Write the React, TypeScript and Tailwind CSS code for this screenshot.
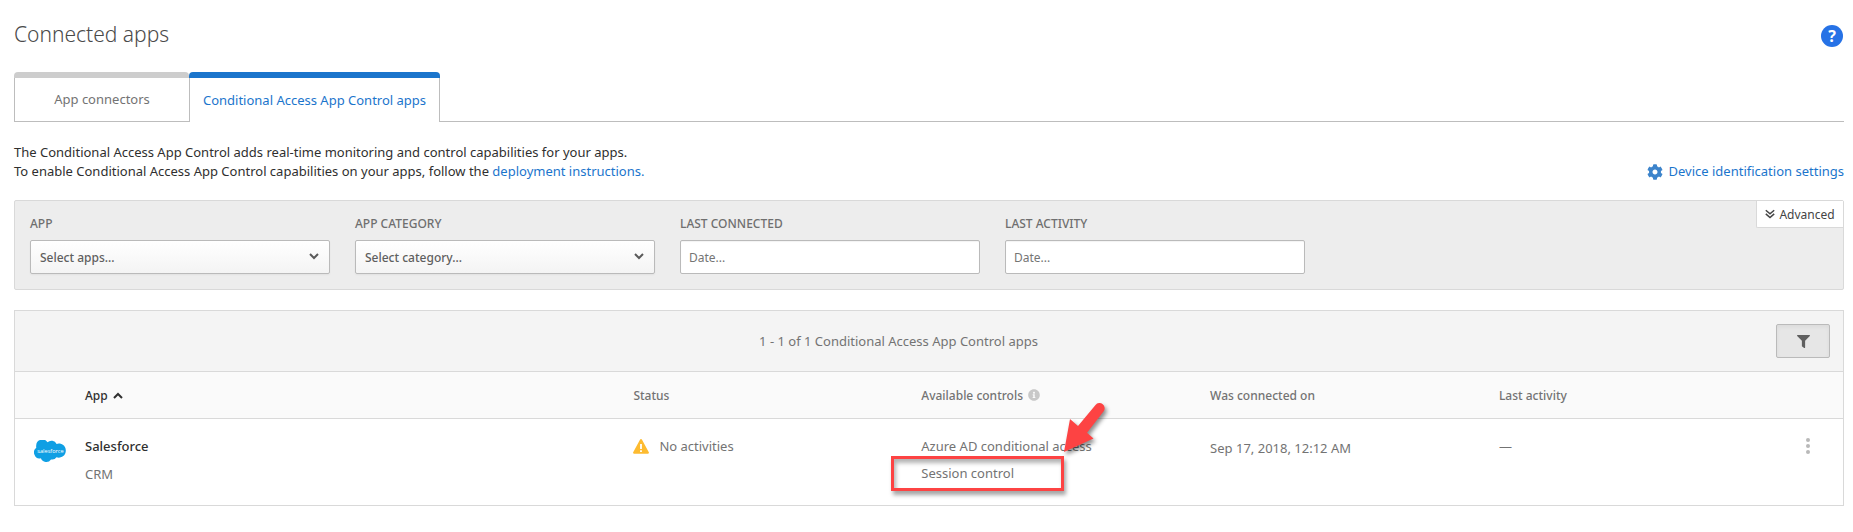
import { FaCog, FaFilter, FaInfoCircle } from 'react-icons/fa';

type Filter = { id: string; label: string; placeholder: string; kind: 'select' | 'date' };

const filters: Filter[] = [
  { id: 'app', label: 'APP', placeholder: 'Select apps...', kind: 'select' },
  { id: 'category', label: 'APP CATEGORY', placeholder: 'Select category...', kind: 'select' },
  { id: 'connected', label: 'LAST CONNECTED', placeholder: 'Date...', kind: 'date' },
  { id: 'activity', label: 'LAST ACTIVITY', placeholder: 'Date...', kind: 'date' },
];

function Chevron({ className }: { className: string }) {
  return (
    <svg viewBox="0 0 10 7" fill="none" stroke="currentColor" strokeWidth="2" className={className} aria-hidden="true">
      <path d="M1 1l4 4 4-4" />
    </svg>
  );
}

function DoubleChevron() {
  return (
    <svg width="10" height="10" viewBox="0 0 10 10" fill="none" stroke="currentColor" strokeWidth="1.5" aria-hidden="true">
      <path d="M.8 1.200l4.200 3.600 4.200-3.600M.8 4.900l4.200 3.600 4.200-3.600" />
    </svg>
  );
}

function WarningIcon() {
  return (
    <svg width="16" height="15" viewBox="0 0 16 15" aria-hidden="true">
      <path d="M7.1.6a1 1 0 0 1 1.8 0l6.9 12.7a1 1 0 0 1-.9 1.5H1.1a1 1 0 0 1-.9-1.5z" fill="#fdbb30" />
      <path d="M7.100 5h1.800v5H7.100zM7.100 11.200h1.800V13H7.100z" fill="#fff" />
    </svg>
  );
}

function SalesforceLogo() {
  return (
    <svg width="32" height="23" viewBox="0 0 32 23" role="img" aria-label="Salesforce">
      <path
        d="M13.500 2.200A6.200 6.200 0 0 0 2.200 5.500 6.500 6.500 0 0 0 2.300 7.800 5.700 5.700 0 0 0 .4 14.500 5.600 5.600 0 0 0 6.900 18.200 5.700 5.700 0 0 0 17 19.400 5.200 5.200 0 0 0 22.500 17.300 7 7 0 0 0 31.800 10.400 6.900 6.900 0 0 0 22.600 3.900 5.800 5.800 0 0 0 13.500 2.200z"
        fill="#0f9fe4"
      />
      <text x="16.500" y="12.800" textAnchor="middle" fontSize="5.600" fill="#fff" fontFamily="Open Sans, sans-serif">
        salesforce
      </text>
    </svg>
  );
}

function Callout() {
  return (
    <svg
      width="54"
      height="62"
      viewBox="0 0 54 62"
      className="pointer-events-none absolute -top-17 -right-[46px] drop-shadow-[2px_3px_2px_rgba(0,0,0,0.45)]"
      aria-hidden="true"
    >
      <path d="M8 56L14 23 22 30 39.500 9A5 5 0 0 1 47.500 15.500L31 36.700 37.500 42.500z" fill="#fd4343" />
    </svg>
  );
}

export default function App() {
  return (
    <main className="min-h-screen bg-white pt-5 pr-[9px] pb-6 pl-3.5 font-['Noto_Sans','Open_Sans',sans-serif] text-[13px] leading-[19px] text-[#737373]">
      <header className="flex h-[52px] items-start justify-between">
        <h1 className="text-[21px] leading-[28px] font-light text-[#4a4a4a]">Connected apps</h1>
        <button
          type="button"
          aria-label="Help"
          className="mt-[5px] mr-px flex h-[22px] w-[22px] items-center justify-center rounded-full bg-[#2672e6] text-[16px] font-bold text-white"
        >
          ?
        </button>
      </header>

      <nav className="flex h-[50px]" aria-label="App types">
        <a href="#connectors" className="flex w-[175px] flex-col overflow-hidden rounded-t-[4px] border-b border-[#bdbdbd]">
          <span className="h-1.5 bg-[#cdcdcd]" />
          <span className="flex flex-1 items-center justify-center border-l border-[#bdbdbd]">App connectors</span>
        </a>
        <a
          href="#conditional"
          aria-current="page"
          className="flex w-[251px] flex-col overflow-hidden rounded-t-[4px] whitespace-nowrap text-[#1b75cc]"
        >
          <span className="h-1.5 bg-[#1b75cc]" />
          <span className="flex flex-1 items-center justify-center border-x border-[#bdbdbd]">
            Conditional Access App Control apps
          </span>
        </a>
        <span className="flex-1 border-b border-[#bdbdbd]" />
      </nav>

      <section className="mt-[21px] flex items-end justify-between">
        <p className="text-[#2f2f2f]">
          The Conditional Access App Control adds real-time monitoring and control capabilities for your apps.
          <br />
          To enable Conditional Access App Control capabilities on your apps, follow the{' '}
          <a href="#deploy" className="text-[#1b75cc]">
            deployment instructions.
          </a>
        </p>
        <a href="#devices" className="flex items-center gap-1.5 text-[#1b75cc]">
          <FaCog size={16} className="text-[#3d84cb]" />
          Device identification settings
        </a>
      </section>

      <form className="mt-[19px] flex items-start justify-between rounded-[2px] border border-[#d9d9d9] bg-[#ededed]">
        <div className="flex gap-[25px] pt-3.5 pb-[15px] pl-[15px] text-[12px]">
          {filters.map((f) => (
            <div key={f.id} className="flex w-[300px] flex-col gap-[7px]">
              <label htmlFor={f.id} className="leading-[18px] font-medium text-[#6f6f6f]">
                {f.label}
              </label>
              {f.kind === 'select' ? (
                <div className="relative">
                  <select
                    id={f.id}
                    className="h-[34px] w-full appearance-none rounded-[2px] border border-[#bababa] bg-linear-to-b from-white to-[#f4f4f4] pl-[9px] font-medium text-[#5f5f5f] shadow-xs"
                  >
                    <option>{f.placeholder}</option>
                  </select>
                  <Chevron className="pointer-events-none absolute top-[13px] right-[11px] h-[7px] w-2.5 text-[#5a5a5a]" />
                </div>
              ) : (
                <input
                  id={f.id}
                  type="text"
                  placeholder={f.placeholder}
                  className="h-[34px] w-full rounded-[2px] border border-[#bababa] bg-white pl-2 inset-shadow-xs placeholder:text-[#757575]"
                />
              )}
            </div>
          ))}
        </div>
        <button
          type="button"
          className="flex h-[27px] w-[87px] items-center justify-center gap-1 rounded-bl-[2px] border-b border-l border-[#d9d9d9] bg-white text-[12px] text-[#444]"
        >
          <DoubleChevron />
          Advanced
        </button>
      </form>

      <section className="mt-5 border border-[#d9d9d9]">
        <div className="flex h-[60px] items-center bg-[#f4f4f4] pr-[13px] pl-1.5">
          <p className="flex-1 text-center">1 - 1 of 1 Conditional Access App Control apps</p>
          <button
            type="button"
            aria-label="Toggle filters"
            className="flex h-[34px] w-[54px] items-center justify-center rounded-[2px] border border-[#bababa] bg-[#e6e6e6] text-[#5f5f5f] inset-shadow-sm"
          >
            <FaFilter size={13} />
          </button>
        </div>

        <table className="w-full table-fixed border-collapse text-left">
          <colgroup>
            <col className="w-[70px]" />
            <col className="w-[30%]" />
            <col className="w-[15.75%]" />
            <col className="w-[15.8%]" />
            <col className="w-[15.8%]" />
            <col />
            <col className="w-[70px]" />
          </colgroup>
          <thead>
            <tr className="h-[47px] border-y border-[#d9d9d9] bg-[#fafafa] text-[12px] whitespace-nowrap">
              <td />
              <th scope="col" className="font-medium text-[#2f2f2f]" aria-sort="ascending">
                <button type="button" className="flex items-center gap-[5px]">
                  App
                  <Chevron className="h-[7px] w-2.5 rotate-180" />
                </button>
              </th>
              <th scope="col" className="font-medium">
                Status
              </th>
              <th scope="col" className="font-medium">
                <span className="flex items-center gap-[5px]">
                  Available controls
                  <FaInfoCircle size={12} className="text-[#c8c8c8]" />
                </span>
              </th>
              <th scope="col" className="font-medium">
                Was connected on
              </th>
              <th scope="col" className="font-medium">
                Last activity
              </th>
              <td />
            </tr>
          </thead>
          <tbody>
            <tr className="h-[86px] align-top whitespace-nowrap">
              <td className="pt-[21px] pl-[19px]">
                <SalesforceLogo />
              </td>
              <td className="pt-[18px]">
                <div className="font-medium text-[#2f2f2f]">Salesforce</div>
                <div className="mt-[9px]">CRM</div>
              </td>
              <td className="pt-[18px]">
                <span className="flex items-center gap-2.5">
                  <WarningIcon />
                  No activities
                </span>
              </td>
              <td className="pt-[18px]">
                <div>Azure AD conditional access</div>
                <div className="relative mt-2 w-[143px]">
                  Session control
                  <div className="pointer-events-none absolute -inset-y-2 -left-[30px] right-0 border-3 border-[#fd4343] shadow-[2px_4px_4px_rgba(0,0,0,0.35),inset_2px_4px_4px_rgba(0,0,0,0.3)]" />
                  <Callout />
                </div>
              </td>
              <td className="pt-5">Sep 17, 2018, 12:12 AM</td>
              <td className="pt-[18px]">—</td>
              <td className="pt-[18px] pl-8">
                <button type="button" aria-label="More actions" className="block">
                  <svg width="6" height="18" viewBox="0 0 6 18" fill="#b9b9b9" aria-hidden="true">
                    <circle cx="3" cy="3" r="2" />
                    <circle cx="3" cy="9" r="2" />
                    <circle cx="3" cy="15" r="2" />
                  </svg>
                </button>
              </td>
            </tr>
          </tbody>
        </table>
      </section>
    </main>
  );
}
